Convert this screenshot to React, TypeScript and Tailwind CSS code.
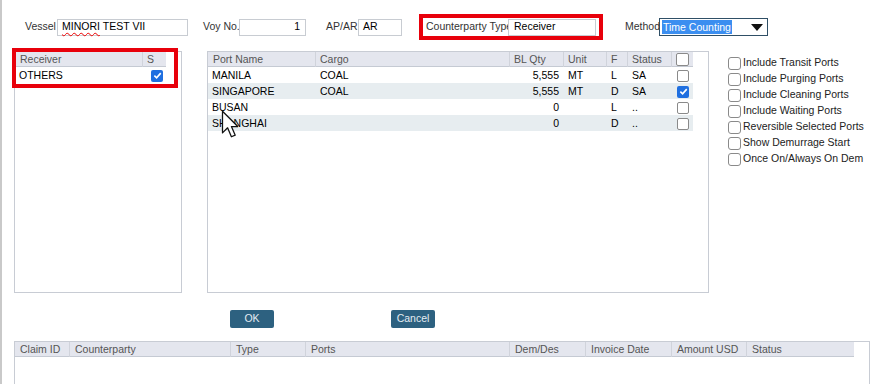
import React from 'react'

const Check = ({on, big}:{on?:boolean, big?:boolean}) => (
  on ? (
    <span className='flex h-[12px] w-[12px] items-center justify-center rounded-[2px] bg-[#1f6fe0]'>
      <svg width='9' height='9' viewBox='0 0 10 10'>
        <path d='M1.5 5.2 L4 7.6 L8.6 2.4' stroke='white' strokeWidth='1.8' fill='none' />
      </svg>
    </span>
  ) : (
    <span className={`block rounded-[2px] border border-[#8a8a8a] bg-white ${big ? 'h-[13px] w-[13px]' : 'h-[12px] w-[12px]'}`}></span>
  )
)

const ports = [
  {name:'MANILA', cargo:'COAL', qty:'5,555', unit:'MT', f:'L', status:'SA', on:false},
  {name:'SINGAPORE', cargo:'COAL', qty:'5,555', unit:'MT', f:'D', status:'SA', on:true},
  {name:'BUSAN', cargo:'', qty:'0', unit:'', f:'L', status:'..', on:false},
  {name:'SHANGHAI', cargo:'', qty:'0', unit:'', f:'D', status:'..', on:false},
]

const options = [
  'Include Transit Ports',
  'Include Purging Ports',
  'Include Cleaning Ports',
  'Include Waiting Ports',
  'Reversible Selected Ports',
  'Show Demurrage Start',
  'Once On/Always On Dem',
]

const claimCols = [
  {t:'Claim ID', w:'w-[55px]'},
  {t:'Counterparty', w:'w-[161px]'},
  {t:'Type', w:'w-[75px]'},
  {t:'Ports', w:'w-[204px]'},
  {t:'Dem/Des', w:'w-[76px]'},
  {t:'Invoice Date', w:'w-[86px]'},
  {t:'Amount USD', w:'w-[75px]'},
  {t:'Status', w:'w-[107px]'},
]

const App = () => {
  return (
    <div className="relative h-[384px] w-[872px] overflow-hidden border-l-2 border-[#c9c9c9] bg-white font-['Liberation_Sans',Arial,sans-serif] text-[10.5px] text-[#222]">
      {/* top fields */}
      <div className='mt-[14px] flex h-[26px] items-center whitespace-nowrap'>
        <span className='ml-[23px] w-[32px] shrink-0 text-[#333]'>Vessel</span>
        <div className='flex h-[17px] w-[131px] shrink-0 items-center border border-[#c8ccd2] pl-[4px] text-black'>
          <span className='underline decoration-wavy decoration-[#e00] decoration-1 underline-offset-2'>MINORI</span>
          <span>&nbsp;TEST VII</span>
        </div>
        <span className='ml-[15px] w-[36px] shrink-0 text-[#333]'>Voy No.</span>
        <div className='flex h-[17px] w-[67px] shrink-0 items-center justify-end border border-[#c8ccd2] pr-[5px] text-black'>1</div>
        <span className='ml-[20px] w-[32px] shrink-0 text-[#333]'>AP/AR</span>
        <div className='flex h-[17px] w-[44px] shrink-0 items-center border border-[#c8ccd2] pl-[4px] text-black'>AR</div>
        <div className='ml-[17px] flex h-[26px] w-[184px] shrink-0 items-center border-4 border-[#e8000b] pl-[3px]'>
          <span className='w-[82px] overflow-hidden text-[#333]'>Counterparty Type</span>
          <div className='flex h-[17px] w-[88px] items-center border border-[#c8ccd2] pl-[5px] text-black'>Receiver</div>
        </div>
        <span className='ml-[22px] w-[34px] shrink-0 overflow-hidden text-[#333]'>Method</span>
        <div className='flex h-[18px] w-[109px] shrink-0 items-center border border-[#2f4f66] pl-[2px]'>
          <span className='bg-[#3b8ef0] px-[1px] leading-[14px] text-white'>Time Counting</span>
          <svg className='ml-auto mr-[4px]' width='12' height='7' viewBox='0 0 12 7'>
            <path d='M0 0 H12 L6 7 Z' fill='#111' />
          </svg>
        </div>
      </div>

      {/* panels */}
      <div className='mt-[11px] flex h-[242px]'>
        <div className='ml-[12px] w-[168px] border border-[#c8ccd4]'>
          <div className='flex h-[15px] w-[151px] items-center border-b border-[#c5cad3] bg-[#e4e6ee] pt-px text-[#555]'>
            <span className='w-[128px] border-r border-[#d0d3db] pl-[5px]'>Receiver</span>
            <span className='pl-[4px]'>S</span>
          </div>
          <div className='flex h-[16px] w-[151px] items-center pt-px'>
            <span className='w-[128px] pl-[4px] text-black'>OTHERS</span>
            <span className='pl-[8px]'><Check on /></span>
          </div>
        </div>

        <div className='ml-[25px] w-[502px] border border-[#c8ccd4]'>
          <div className='flex h-[15px] w-[485px] items-center border-b border-[#c5cad3] bg-[#e4e6ee] pt-px text-[#555]'>
            <span className='w-[108px] border-r border-[#d0d3db] pl-[5px]'>Port Name</span>
            <span className='w-[194px] border-r border-[#d0d3db] pl-[4px]'>Cargo</span>
            <span className='w-[54px] border-r border-[#d0d3db] pl-[4px]'>BL Qty</span>
            <span className='w-[43px] border-r border-[#d0d3db] pl-[4px]'>Unit</span>
            <span className='w-[21px] border-r border-[#d0d3db] pl-[4px]'>F</span>
            <span className='w-[44px] border-r border-[#d0d3db] pl-[4px]'>Status</span>
            <span className='pl-[4px]'><Check big /></span>
          </div>
          {ports.map((p, i) => (
            <div key={p.name} className={`flex h-[16px] w-[485px] items-center pt-px text-black ${i % 2 ? 'bg-[#e7edf0]' : 'bg-white'}`}>
              <span className='w-[108px] pl-[4px]'>{p.name}</span>
              <span className='w-[194px] pl-[4px]'>{p.cargo}</span>
              <span className='w-[54px] pr-[5px] text-right'>{p.qty}</span>
              <span className='w-[43px] pl-[4px]'>{p.unit}</span>
              <span className='w-[21px] pl-[4px]'>{p.f}</span>
              <span className='w-[44px] pl-[4px]'>{p.status}</span>
              <span className='pl-[5px]'><Check on={p.on} /></span>
            </div>
          ))}
        </div>

        <div className='ml-[19px] flex flex-col pt-[4px]'>
          {options.map(o => (
            <label key={o} className='flex h-[16px] items-center gap-[2px] whitespace-nowrap text-[#222]'>
              <span className='block h-[13px] w-[13px] rounded-[3px] border border-[#8a8a8a] bg-white'></span>
              <span>{o}</span>
            </label>
          ))}
        </div>
      </div>

      {/* buttons */}
      <div className='mt-[17px] flex'>
        <button className='ml-[228px] h-[18px] w-[44px] rounded-[2px] bg-[#2d6180] text-[#e4ecf2]'>OK</button>
        <button className='ml-[117px] h-[18px] w-[44px] rounded-[2px] bg-[#2d6180] text-[#e4ecf2]'>Cancel</button>
      </div>

      {/* claims table */}
      <div className='ml-[12px] mt-[13px] h-[60px] w-[856px] border-x border-t border-[#c8ccd4]'>
        <div className='flex h-[15px] w-[839px] items-center border-b border-[#c5cad3] bg-[#e4e6ee] pt-px text-[#555]'>
          {claimCols.map((c, i) => (
            <span key={c.t} className={`${c.w} pl-[5px] ${i < claimCols.length - 1 ? 'border-r border-[#d0d3db]' : ''}`}>{c.t}</span>
          ))}
        </div>
      </div>

      {/* annotation box over receiver grid */}
      <div className='absolute left-[10px] top-[48px] h-[40px] w-[166px] border-4 border-[#e8000b]'></div>

      {/* mouse pointer */}
      <svg className='absolute left-[219px] top-[110px]' width='17' height='28' viewBox='0 0 13 22'>
        <path d='M1 1 L1 18 L5 14 L8 21 L11 19.8 L8 13 L13 13 Z' fill='white' stroke='#111' strokeWidth='1' strokeLinejoin='round' />
      </svg>
    </div>
  )
}

export default App
